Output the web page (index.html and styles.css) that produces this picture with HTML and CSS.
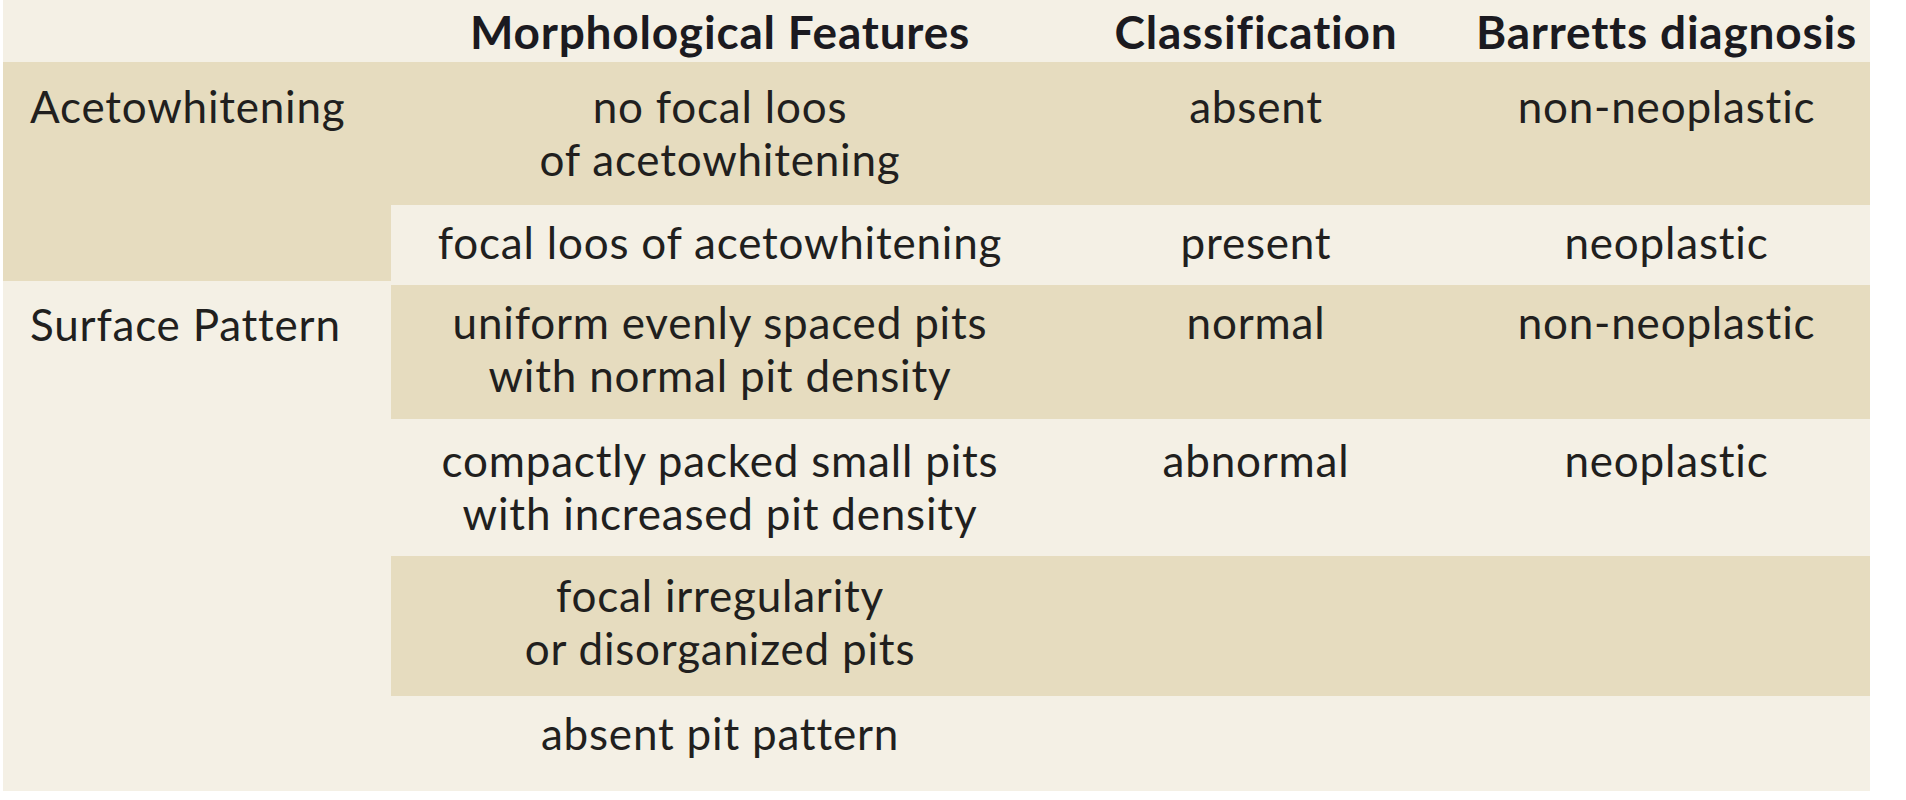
FILE: index.html
```html
<!DOCTYPE html>
<html lang="en">
<head>
<meta charset="utf-8">
<title>Barretts diagnosis table</title>
<link rel="stylesheet" href="styles.css">
</head>
<body>
<table class="grid">
  <colgroup>
    <col class="c1">
    <col class="c2">
    <col class="c3">
    <col class="c4">
  </colgroup>
  <thead>
    <tr class="r-head">
      <th class="label"></th>
      <th>Morphological Features</th>
      <th>Classification</th>
      <th class="last">Barretts diagnosis</th>
    </tr>
  </thead>
  <tbody>
    <tr class="r1 tan">
      <td class="label tan" rowspan="2">Acetowhitening</td>
      <td>no focal loos<br>of acetowhitening</td>
      <td>absent</td>
      <td class="last">non-neoplastic</td>
    </tr>
    <tr class="r2 light">
      <td>focal loos of acetowhitening</td>
      <td>present</td>
      <td class="last">neoplastic</td>
    </tr>
    <tr class="r3 tan">
      <td class="label light" rowspan="4">Surface Pattern</td>
      <td>uniform evenly spaced pits<br>with normal pit density</td>
      <td>normal</td>
      <td class="last">non-neoplastic</td>
    </tr>
    <tr class="r4 light">
      <td>compactly packed small pits<br>with increased pit density</td>
      <td>abnormal</td>
      <td class="last">neoplastic</td>
    </tr>
    <tr class="r5 tan">
      <td>focal irregularity<br>or disorganized pits</td>
      <td></td>
      <td class="last"></td>
    </tr>
    <tr class="r6 light">
      <td>absent pit pattern</td>
      <td></td>
      <td class="last"></td>
    </tr>
  </tbody>
</table>
</body>
</html>
```

FILE: styles.css
```css
html, body {
  margin: 0;
  padding: 0;
  background: #ffffff;
}

body {
  padding-left: 3px;
  font-family: Lato, "Open Sans", "Liberation Sans", sans-serif;
  color: #211f1e;
}

.grid {
  border-collapse: collapse;
  border-spacing: 0;
  table-layout: fixed;
  width: 1867px;
  background: #f4f0e5;
}

.c1 { width: 388px; }
.c2 { width: 658px; }
.c3 { width: 414px; }
.c4 { width: 407px; }

th, td {
  padding: 0;
  vertical-align: top;
  text-align: center;
  font-size: 44px;
  letter-spacing: 0.8px;
  line-height: 53px;
}

th {
  font-size: 46px;
  font-weight: 700;
  color: #1b1a20;
  height: 62px;
  padding-top: 5px;
  box-sizing: border-box;
  background: #f4f0e5;
}

td.label {
  text-align: left;
  padding-left: 27px;
}

tr.tan > td { background: #e6dcbf; }
tr.light > td { background: #f4f0e5; }
td.label.tan { background: #e6dcbf; }
td.label.light { background: #f4f0e5; }

.r1 > td { height: 143px; padding-top: 18px; }
.r2 > td { height: 78px; padding-top: 11px; }
.r3 > td { height: 136px; padding-top: 11px; border-top: 4px solid #f4f0e5; }
.r3 > td.label { padding-top: 13px; border-top: 4px solid #f4f0e5; }
.r4 > td { height: 137px; padding-top: 15px; }
.r5 > td { height: 140px; padding-top: 13px; }
.r6 > td { height: 95px; padding-top: 11px; }

tbody td { box-sizing: border-box; }
```
